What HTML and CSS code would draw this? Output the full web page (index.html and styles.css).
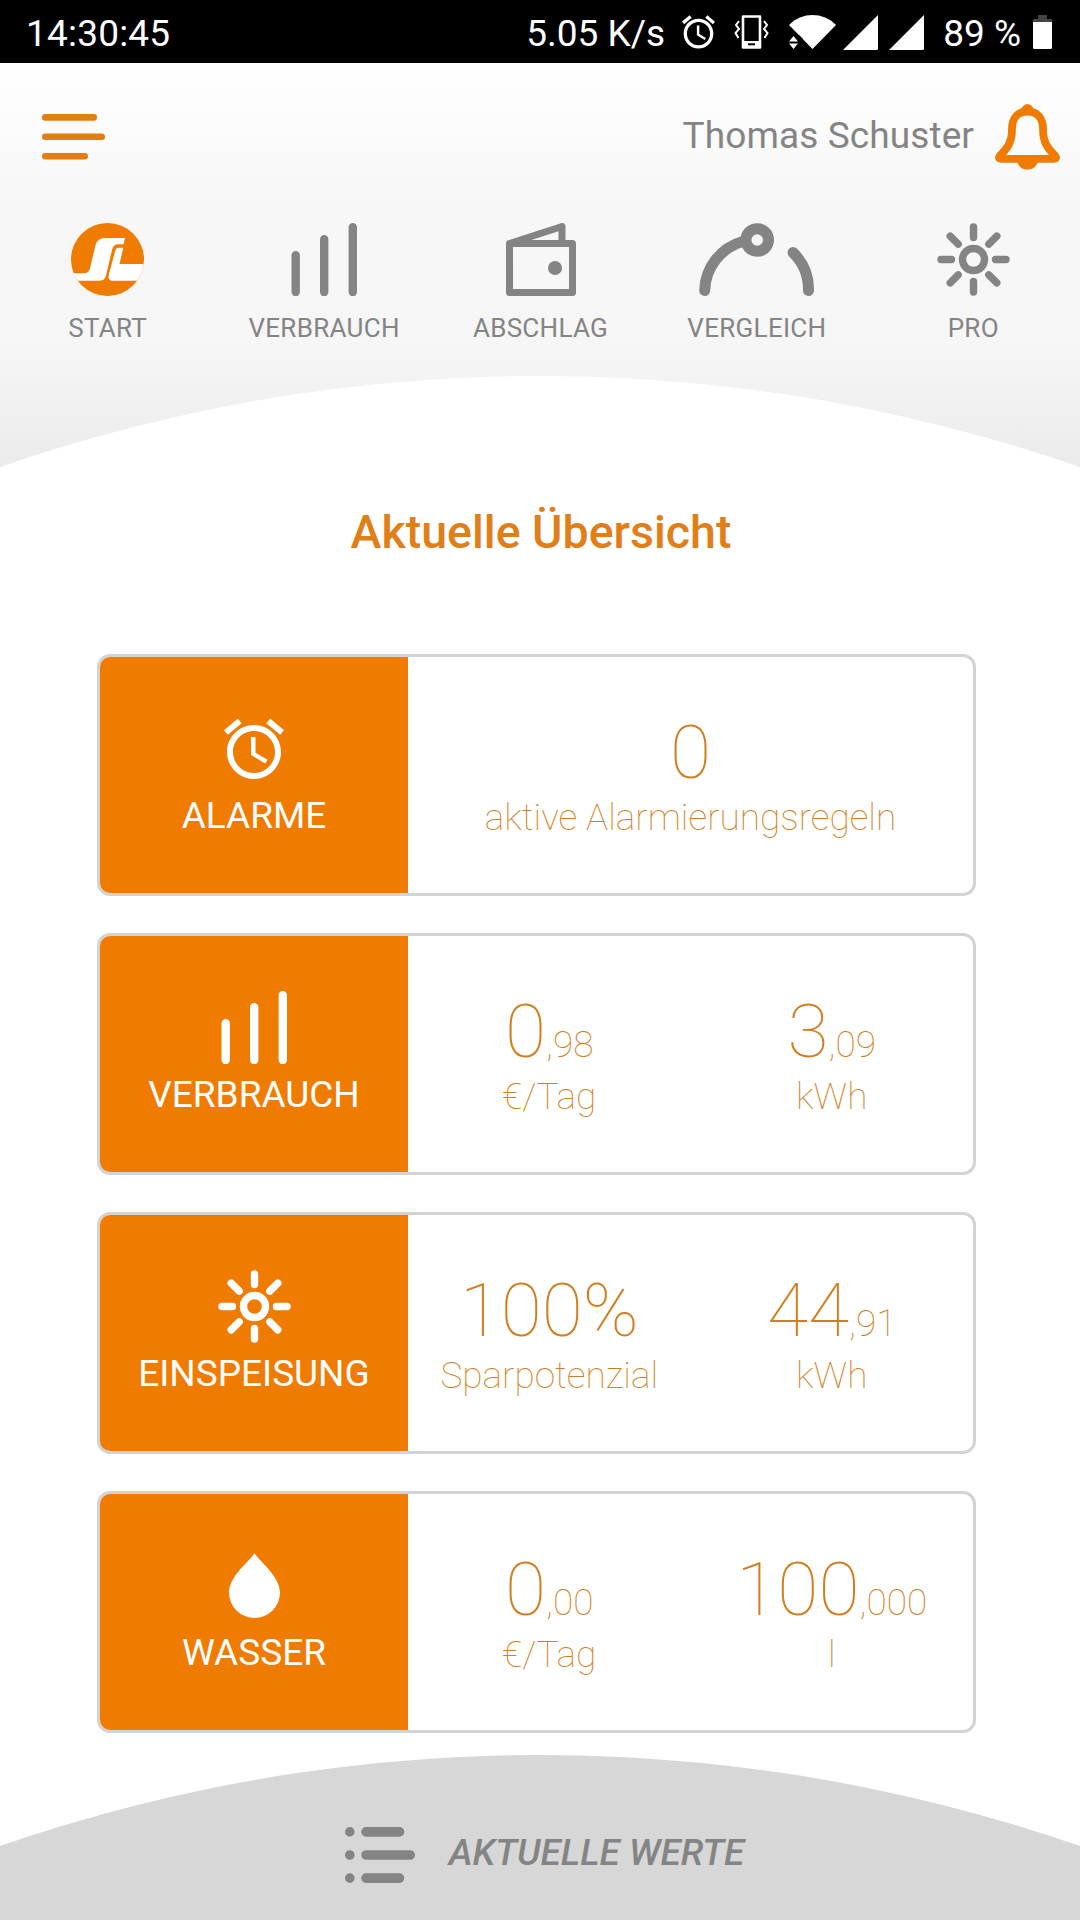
FILE: index.html
```
<!DOCTYPE html>
<html lang="de">
<head>
  <meta charset="UTF-8" />
  <meta name="viewport" content="width=device-width, initial-scale=1.0" />
  <title>Aktuelle Übersicht</title>
  <link rel="stylesheet" href="styles.css">
</head>
<body>
  <!-- shared icons -->
  <svg class="sprite" width="0" height="0">
    <symbol id="icon-bars" viewBox="0 0 66 73">
      <path d="M4.7 32.2V69M33.2 16.2V69M61.8 4.2V69" fill="none" stroke="currentColor" stroke-width="8.4" stroke-linecap="round" />
    </symbol>
    <symbol id="icon-sun" viewBox="0 0 73 73">
      <g fill="none" stroke="currentColor" stroke-width="7.4" stroke-linecap="round">
        <circle cx="36.5" cy="36.5" r="11" />
        <path d="M36.5 4V14.5M36.5 58.5V69M4 36.5H14.5M58.5 36.5H69M13.2 13.2L21.2 21.2M51.8 51.8L59.8 59.8M13.2 59.8L21.2 51.8M51.8 21.2L59.8 13.2" />
      </g>
    </symbol>
    <symbol id="icon-alarm" viewBox="2 2 20 20">
      <path d="M22 5.72l-4.6-3.86-1.29 1.53 4.6 3.86L22 5.72zM7.88 3.39L6.6 1.86 2 5.71l1.29 1.53 4.59-3.85zM12.5 8H11v6l4.75 2.85.75-1.23-4-2.37V8zM12 4c-4.97 0-9 4.03-9 9s4.02 9 9 9c4.97 0 9-4.03 9-9s-4.03-9-9-9zm0 16c-3.87 0-7-3.13-7-7s3.13-7 7-7 7 3.13 7 7-3.13 7-7 7z" fill="currentColor" />
    </symbol>
  </svg>

  <div class="status-bar">
    <span class="time">14:30:45</span>
    <span class="speed">5.05 K/s</span>
    <svg class="st-alarm" width="33" height="34"><use href="#icon-alarm" /></svg>
    <svg class="st-vibrate" width="35" height="34" viewBox="0 0 35 34">
      <path d="M9 1.5h17v31H9z" fill="none" stroke="#fff" stroke-width="2.6" stroke-linejoin="round" />
      <path d="M9 26h17v6.5H9z" fill="#fff" />
      <path d="M14 29.3h7" stroke="#000" stroke-width="2" />
      <path d="M5 6L2 10l3 4-3.5 4 3 5M30 6L33 10l-3 4 3.5 4-3 5" fill="none" stroke="#fff" stroke-width="2" />
    </svg>
    <svg class="st-wifi" width="47" height="34" viewBox="0 0 47 34">
      <path d="M0 10C13-3.3 34-3.3 47 10L23.5 34z" fill="#fff" />
      <path d="M-1 20H10L13.5 23.5V34H-1z" fill="#000" />
      <path d="M0 26.5L4.5 21L9 26.5zM0 28.5L4.5 34L9 28.5z" fill="#fff" />
    </svg>
    <svg class="st-signal" width="35" height="35"><path d="M35 0V33.5q0 1.5-1.5 1.5H0z" fill="#fff" /></svg>
    <svg class="st-signal" width="35" height="35"><path d="M35 0V33.5q0 1.5-1.5 1.5H0z" fill="#fff" /></svg>
    <span class="percent">89 %</span>
    <svg class="st-battery" width="19" height="34">
      <path d="M0 4h5V0h9v4h5v3H0z" fill="#444" />
      <path d="M0 7h19v25.5q0 1.5-1.5 1.5h-16q-1.5 0-1.5-1.5z" fill="#fff" />
    </svg>
  </div>

  <header class="header">
    <div class="top-row">
      <svg class="menu" width="63" height="46" viewBox="0 0 63 46">
        <path d="M3.3 3.4H51.7M3.3 22.8H59.7M3.3 42.2H42.7" stroke="currentColor" stroke-width="6.6" stroke-linecap="round" />
      </svg>
      <span class="user">Thomas Schuster</span>
      <svg class="bell" width="65" height="66" viewBox="0 0 65 66">
        <path d="M32.5 7.5C22 7.5 17 15 17 25C17 37 13.5 43.5 5 51.5Q2.5 54.8 6 54.8H59Q62.5 54.8 60 51.5C51.5 43.5 48 37 48 25C48 15 43 7.5 32.5 7.5z" fill="none" stroke="currentColor" stroke-width="7.8" stroke-linejoin="round" />
        <path d="M25.5 7Q28 0 32.5 0T39.5 7zM21.5 57C24 63 27 65.5 32.5 65.5S41 63 43.5 57z" fill="currentColor" />
      </svg>
    </div>
    <nav class="nav">
      <a class="nav-item active">
        <svg width="73" height="73" viewBox="0 0 73 73">
          <clipPath id="disc"><circle cx="36.5" cy="36.5" r="36.5" /></clipPath>
          <g clip-path="url(#disc)">
            <path d="M0 0H73V73H0z" fill="#ef7c00" />
            <path d="M54 15H34Q26.5 15 24.5 22L19 45Q18 50.3 13 50.3H0V57.7H29Q33.5 57.7 35 52.5L41 27Q42.3 21.3 47 21.3H52.5z" fill="#fff" />
            <path d="M52.3 24.7H48Q45 24.7 44.2 28L37.8 51.5Q36.5 57.7 41.5 57.7H73V41H48.5z" fill="#fff" />
          </g>
        </svg>
        <span>START</span>
      </a>
      <a class="nav-item">
        <svg width="66" height="73"><use href="#icon-bars" /></svg>
        <span>VERBRAUCH</span>
      </a>
      <a class="nav-item">
        <svg width="70" height="73" viewBox="0 0 70 73">
          <path d="M3.5 20.5H66.5V69.5H3.5zM3.5 20.5L56 3.5V20" fill="none" stroke="currentColor" stroke-width="7" stroke-linejoin="round" />
          <circle cx="49" cy="45" r="7" fill="currentColor" />
        </svg>
        <span>ABSCHLAG</span>
      </a>
      <a class="nav-item">
        <svg width="115" height="73" viewBox="0 0 115 73">
          <g fill="none" stroke="currentColor" stroke-width="11" stroke-linecap="round">
            <path d="M5.7 67.5A52 52 0 0 1 44 18.5M94 29.5A52 52 0 0 1 109.5 67.5" />
            <circle cx="58.2" cy="17" r="11.3" />
          </g>
        </svg>
        <span>VERGLEICH</span>
      </a>
      <a class="nav-item">
        <svg width="73" height="73"><use href="#icon-sun" /></svg>
        <span>PRO</span>
      </a>
    </nav>
  </header>

  <main class="content">
    <h1>Aktuelle Übersicht</h1>
    <div class="cards">
      <section class="card">
        <div class="card-label">
          <svg width="60" height="60"><use href="#icon-alarm" /></svg>
          <span>ALARME</span>
        </div>
        <div class="value">
          <p class="number">0</p>
          <p class="unit">aktive Alarmierungsregeln</p>
        </div>
      </section>
      <section class="card">
        <div class="card-label">
          <svg width="66" height="73"><use href="#icon-bars" /></svg>
          <span>VERBRAUCH</span>
        </div>
        <div class="value">
          <p class="number">0<small>,98</small></p>
          <p class="unit">€/Tag</p>
        </div>
        <div class="value">
          <p class="number">3<small>,09</small></p>
          <p class="unit">kWh</p>
        </div>
      </section>
      <section class="card">
        <div class="card-label">
          <svg width="73" height="73"><use href="#icon-sun" /></svg>
          <span>EINSPEISUNG</span>
        </div>
        <div class="value">
          <p class="number">100%</p>
          <p class="unit">Sparpotenzial</p>
        </div>
        <div class="value">
          <p class="number">44<small>,91</small></p>
          <p class="unit">kWh</p>
        </div>
      </section>
      <section class="card">
        <div class="card-label">
          <svg width="51" height="65" viewBox="0 0 51 65">
            <path d="M25.5 0C30 8 51 23 51 39.5A25.5 25.5 0 0 1 0 39.5C0 23 21 8 25.5 0z" fill="currentColor" />
          </svg>
          <span>WASSER</span>
        </div>
        <div class="value">
          <p class="number">0<small>,00</small></p>
          <p class="unit">€/Tag</p>
        </div>
        <div class="value">
          <p class="number">100<small>,000</small></p>
          <p class="unit">l</p>
        </div>
      </section>
    </div>
  </main>

  <footer class="footer">
    <svg width="70" height="56" viewBox="0 0 70 56">
      <path d="M4.8 4.9h0M4.8 28h0M4.8 51.1h0M21 4.9H54.5M21 28H65.2M21 51.1H54.5" stroke="currentColor" stroke-width="9.6" stroke-linecap="round" />
    </svg>
    <span>AKTUELLE WERTE</span>
  </footer>
</body>
</html>
```
FILE: styles.css
```
* {
  box-sizing: border-box;
}
body {
  margin: 0;
  width: 1080px;
  height: 1920px;
  overflow: hidden;
  display: flex;
  flex-direction: column;
  font-family: Roboto, sans-serif;
  background: #fff;
}
svg {
  display: block;
  flex-shrink: 0;
}
.sprite {
  position: absolute;
}

/* status bar */
.status-bar {
  display: flex;
  align-items: center;
  height: 63px;
  padding: 1px 28px 0 26px;
  background: #000;
  color: #fff;
  font-size: 37px;
  white-space: nowrap;
  flex-shrink: 0;
}
.status-bar span {
  padding-top: 2px;
}
.time {
  margin-right: auto;
  letter-spacing: 0.2px;
}
.st-alarm {
  margin-left: 17px;
}
.st-vibrate {
  margin-left: 19px;
}
.st-wifi {
  margin-left: 20px;
}
.st-signal {
  margin-left: 7px;
}
.st-signal + .st-signal {
  margin-left: 11px;
}
.percent {
  margin-left: 19px;
}
.st-battery {
  margin-left: 12px;
}

/* header */
.header {
  height: 404px;
  flex-shrink: 0;
  background: linear-gradient(#fff 0%, #f7f7f7 35%, #f6f6f6 70%, #ebebeb 100%);
  color: #848484;
}
.top-row {
  display: flex;
  align-items: center;
  height: 147px;
  padding: 0 20px 0 42px;
}
.menu {
  color: #e47d11;
}
.user {
  margin-left: auto;
  margin-right: 21px;
  padding-bottom: 2px;
  font-size: 37px;
  letter-spacing: 0.1px;
}
.bell {
  color: #ef7c00;
}
.nav {
  display: grid;
  grid-template-columns: repeat(5, 216.4px);
  justify-content: center;
  padding: 13px 0 0 1px;
}
.nav-item {
  display: flex;
  flex-direction: column;
  align-items: center;
  font-size: 26px;
  line-height: 30px;
  letter-spacing: 0.3px;
  gap: 17px;
}

/* the round top edge cuts into the header */
.content {
  height: 1379px;
  margin-top: -91px;
  padding-top: 126px;
  background: #fff;
  clip-path: circle(1648px at 50% 1648px);
  flex-shrink: 0;
}
h1 {
  margin: 0 0 92px;
  padding-left: 2px;
  font-size: 46.5px;
  font-weight: 500;
  line-height: 60px;
  text-align: center;
  color: #e07e17;
}
.cards {
  display: flex;
  flex-direction: column;
  gap: 37px;
  width: 879px;
  margin-left: 97px;
}
.card {
  display: flex;
  height: 242px;
  border: 3px solid #d3d3d3;
  border-radius: 13px;
  overflow: hidden;
}
.card-label {
  display: grid;
  grid-template-rows: 73px 44px;
  row-gap: 8px;
  justify-items: center;
  align-items: center;
  align-content: start;
  width: 308px;
  padding-top: 55px;
  background: #ef7c00;
  color: #fff;
  font-size: 37px;
}
.value {
  flex: 1;
  padding-top: 51px;
  text-align: center;
  color: #d07e20;
  font-weight: 100;
}
.number {
  margin: 0;
  font-size: 75px;
  line-height: 88px;
}
.number small {
  font-size: 37px;
  line-height: 1;
}
.unit {
  margin: 0;
  font-size: 37px;
  line-height: 44px;
}

/* bottom button */
.footer {
  display: flex;
  justify-content: center;
  align-items: center;
  gap: 34px;
  height: 165px;
  margin-top: auto;
  padding: 35px 0 0 9px;
  background: #d7d7d7;
  clip-path: circle(1648px at 50% 1648px);
  color: #848484;
  font-size: 37px;
  font-weight: 500;
  font-style: italic;
}
.footer span {
  padding-bottom: 5px;
}
```
